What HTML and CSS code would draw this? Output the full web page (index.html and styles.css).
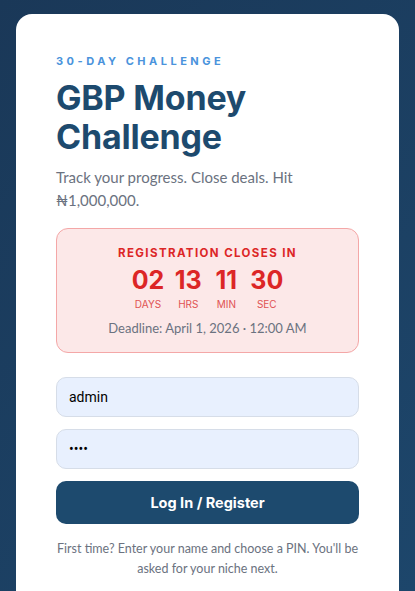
FILE: index.html
```html
<!DOCTYPE html>
<html lang="en">
<head>
<meta charset="utf-8">
<title>GBP Money Challenge</title>
<link rel="stylesheet" href="styles.css">
</head>
<body>
<main class="card">
  <p class="eyebrow">30-DAY CHALLENGE</p>
  <h1 class="title">GBP Money Challenge</h1>
  <p class="subtitle">Track your progress. Close deals. Hit ₦1,000,000.</p>

  <section class="countdown">
    <p class="cd-label">REGISTRATION CLOSES IN</p>
    <div class="cd-units">
      <div class="cd-unit"><span class="cd-num">02</span><span class="cd-cap">DAYS</span></div>
      <div class="cd-unit"><span class="cd-num">13</span><span class="cd-cap">HRS</span></div>
      <div class="cd-unit"><span class="cd-num">11</span><span class="cd-cap">MIN</span></div>
      <div class="cd-unit"><span class="cd-num">30</span><span class="cd-cap">SEC</span></div>
    </div>
    <p class="cd-deadline">Deadline: April 1, 2026 · 12:00 AM</p>
  </section>

  <form class="form">
    <input class="field" type="text" value="admin">
    <input class="field" type="password" value="1234">
    <button class="btn" type="button">Log In / Register</button>
  </form>
  <p class="note">First time? Enter your name and choose a PIN. You'll be asked for your niche next.</p>
</main>
</body>
</html>
```

FILE: styles.css
```css
* { box-sizing: border-box; }
html, body { height: 100%; }
body {
  margin: 0;
  background: linear-gradient(135deg, #1a3858 0%, #1d466b 100%);
  font-family: "Inter", "Noto Sans", sans-serif;
  padding: 14px 16px 0;
  overflow: hidden;
}
.card {
  background: #fff;
  border-radius: 16px 16px 0 0;
  padding: 40px 40px 40px;
  min-height: 600px;
}
.eyebrow {
  margin: 0;
  font-size: 11px;
  font-weight: 700;
  letter-spacing: 3.5px;
  color: #4a93dc;
  line-height: 14px;
}
.title {
  margin: 10px 0 0;
  font-size: 34px;
  line-height: 39px;
  font-weight: 700;
  color: #1d4a6e;
  letter-spacing: -0.2px;
}
.subtitle {
  margin: 10px 0 0;
  font-family: "Lato", "Inter", sans-serif;
  font-size: 15px;
  line-height: 23px;
  color: #6b7280;
}
.countdown {
  margin-top: 16px;
  background: #fce8e8;
  border: 1px solid #f4a7a7;
  border-radius: 12px;
  padding: 16px 12px 16px;
  text-align: center;
}
.cd-label {
  margin: 0;
  font-size: 11.5px;
  font-weight: 700;
  letter-spacing: 1.4px;
  color: #dc2626;
  line-height: 16px;
}
.cd-units {
  display: flex;
  justify-content: center;
  gap: 10px;
  margin-top: 4px;
}
.cd-unit {
  display: flex;
  flex-direction: column;
  align-items: center;
  min-width: 28px;
}
.cd-num {
  font-size: 25px;
  font-weight: 700;
  color: #dc2626;
  line-height: 30px;
}
.cd-cap {
  font-size: 10px;
  color: #e05252;
  line-height: 12px;
  margin-top: 3px;
}
.cd-deadline {
  margin: 10px 0 0;
  font-family: "Lato", "Inter", sans-serif;
  font-size: 13px;
  color: #6b7280;
  line-height: 16px;
}
.form {
  margin-top: 24px;
  display: flex;
  flex-direction: column;
  gap: 12px;
}
.field {
  height: 40px;
  border: 1px solid #d6dde8;
  border-radius: 10px;
  background: #e8f0fe;
  padding: 0 12px;
  font-family: "Roboto", "Liberation Sans", sans-serif;
  font-size: 14px;
  color: #000;
  outline: none;
}
.btn {
  height: 43px;
  border: none;
  border-radius: 10px;
  background: #1d4a6e;
  color: #fff;
  font-family: inherit;
  font-size: 14.5px;
  font-weight: 700;
}
.note {
  margin: 15px 0 0;
  text-align: center;
  font-family: "Lato", "Inter", sans-serif;
  font-size: 12.5px;
  line-height: 20px;
  color: #6b7280;
}
```
